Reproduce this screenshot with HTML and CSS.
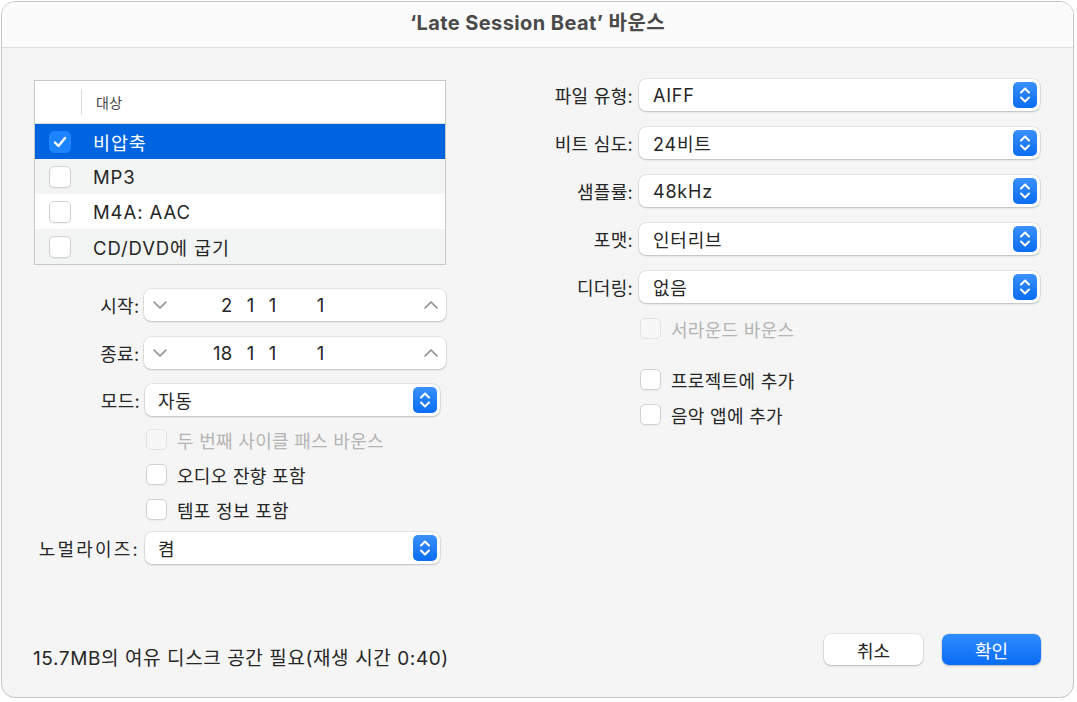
FILE: index.html
```html
<!DOCTYPE html>
<html lang="ko">
<head>
    <meta charset="UTF-8">
    <meta name="viewport" content="width=device-width, initial-scale=1.0">
    <title>바운스</title>
    <link rel="stylesheet" href="styles.css">
</head>
<body>
  <div class="window">
    <div class="titlebar">‘Late Session Beat’ 바운스</div>
    <div class="main">
      <div class="left">
        <div class="list">
          <div class="list-head"><span class="sep"></span>대상</div>
          <div class="list-row selected"><span class="cb checked"><svg width="14" height="12" viewBox="0 0 14 12"><path d="M2 6.5 L5.5 10 L12 2" fill="none" stroke="#fff" stroke-width="2.4" stroke-linecap="round" stroke-linejoin="round"/></svg></span>비압축</div>
          <div class="list-row grey"><span class="cb"></span>MP3</div>
          <div class="list-row"><span class="cb"></span>M4A: AAC</div>
          <div class="list-row grey"><span class="cb"></span>CD/DVD에 굽기</div>
        </div>

        <div class="field f-start">
          <label>시작:</label>
          <div class="stepper">
            <svg class="chev" width="16" height="10" viewBox="0 0 16 10"><path d="M2 2 L8 8 L14 2" fill="none" stroke="#8c8c8c" stroke-width="1.6" stroke-linecap="round" stroke-linejoin="round"/></svg>
            <div class="nums"><span class="n1">2</span><span class="n2">1</span><span class="n3">1</span><span class="n4">1</span></div>
            <svg class="chev" width="16" height="10" viewBox="0 0 16 10"><path d="M2 8 L8 2 L14 8" fill="none" stroke="#8c8c8c" stroke-width="1.6" stroke-linecap="round" stroke-linejoin="round"/></svg>
          </div>
        </div>
        <div class="field f-end">
          <label>종료:</label>
          <div class="stepper">
            <svg class="chev" width="16" height="10" viewBox="0 0 16 10"><path d="M2 2 L8 8 L14 2" fill="none" stroke="#8c8c8c" stroke-width="1.6" stroke-linecap="round" stroke-linejoin="round"/></svg>
            <div class="nums"><span class="n1">18</span><span class="n2">1</span><span class="n3">1</span><span class="n4">1</span></div>
            <svg class="chev" width="16" height="10" viewBox="0 0 16 10"><path d="M2 8 L8 2 L14 8" fill="none" stroke="#8c8c8c" stroke-width="1.6" stroke-linecap="round" stroke-linejoin="round"/></svg>
          </div>
        </div>
        <div class="field f-mode">
          <label>모드:</label>
          <div class="select short"><span>자동</span><span class="arrows"><svg width="24" height="26" viewBox="0 0 24 26"><path d="M8 10.5 L12 6.5 L16 10.5 M8 15.5 L12 19.5 L16 15.5" fill="none" stroke="#fff" stroke-width="2" stroke-linecap="round" stroke-linejoin="round"/></svg></span></div>
        </div>
        <div class="check left-check c-second disabled"><span class="cb"></span>두 번째 사이클 패스 바운스</div>
        <div class="check left-check c-gap"><span class="cb"></span>오디오 잔향 포함</div>
        <div class="check left-check c-gap"><span class="cb"></span>템포 정보 포함</div>
        <div class="field f-norm">
          <label class="wide">노멀라이즈:</label>
          <div class="select short"><span>켬</span><span class="arrows"><svg width="24" height="26" viewBox="0 0 24 26"><path d="M8 10.5 L12 6.5 L16 10.5 M8 15.5 L12 19.5 L16 15.5" fill="none" stroke="#fff" stroke-width="2" stroke-linecap="round" stroke-linejoin="round"/></svg></span></div>
        </div>
      </div>

      <div class="right">
        <div class="field r-field first">
          <label>파일 유형:</label>
          <div class="select"><span>AIFF</span><span class="arrows"><svg width="24" height="26" viewBox="0 0 24 26"><path d="M8 10.5 L12 6.5 L16 10.5 M8 15.5 L12 19.5 L16 15.5" fill="none" stroke="#fff" stroke-width="2" stroke-linecap="round" stroke-linejoin="round"/></svg></span></div>
        </div>
        <div class="field r-field">
          <label>비트 심도:</label>
          <div class="select"><span>24비트</span><span class="arrows"><svg width="24" height="26" viewBox="0 0 24 26"><path d="M8 10.5 L12 6.5 L16 10.5 M8 15.5 L12 19.5 L16 15.5" fill="none" stroke="#fff" stroke-width="2" stroke-linecap="round" stroke-linejoin="round"/></svg></span></div>
        </div>
        <div class="field r-field">
          <label>샘플률:</label>
          <div class="select"><span>48kHz</span><span class="arrows"><svg width="24" height="26" viewBox="0 0 24 26"><path d="M8 10.5 L12 6.5 L16 10.5 M8 15.5 L12 19.5 L16 15.5" fill="none" stroke="#fff" stroke-width="2" stroke-linecap="round" stroke-linejoin="round"/></svg></span></div>
        </div>
        <div class="field r-field">
          <label>포맷:</label>
          <div class="select"><span>인터리브</span><span class="arrows"><svg width="24" height="26" viewBox="0 0 24 26"><path d="M8 10.5 L12 6.5 L16 10.5 M8 15.5 L12 19.5 L16 15.5" fill="none" stroke="#fff" stroke-width="2" stroke-linecap="round" stroke-linejoin="round"/></svg></span></div>
        </div>
        <div class="field r-field">
          <label>디더링:</label>
          <div class="select"><span>없음</span><span class="arrows"><svg width="24" height="26" viewBox="0 0 24 26"><path d="M8 10.5 L12 6.5 L16 10.5 M8 15.5 L12 19.5 L16 15.5" fill="none" stroke="#fff" stroke-width="2" stroke-linecap="round" stroke-linejoin="round"/></svg></span></div>
        </div>
        <div class="check right-check r-surround disabled"><span class="cb"></span>서라운드 바운스</div>
        <div class="check right-check r-project"><span class="cb"></span>프로젝트에 추가</div>
        <div class="check right-check r-music"><span class="cb"></span>음악 앱에 추가</div>
      </div>
    </div>

    <div class="footer">
      <div class="note">15.7MB의 여유 디스크 공간 필요(재생 시간 0:40)</div>
      <div class="buttons">
        <button class="btn">취소</button>
        <button class="btn primary">확인</button>
      </div>
    </div>
  </div>
</body>
</html>
```

FILE: styles.css
```css
* {
  margin: 0;
  padding: 0;
  box-sizing: border-box;
}
body {
  background-color: #fff;
  font-family: Inter, "Noto Sans CJK KR", sans-serif;
  font-size: 18px;
  letter-spacing: 0.3px;
  color: #262626;
}
.window {
  margin: 1px 0 0 1px;
  width: 1073px;
  height: 697px;
  border: 1px solid #c4c4c4;
  border-radius: 14px;
  background-color: #f5f5f5;
  overflow: hidden;
  display: flex;
  flex-direction: column;
}
.titlebar {
  height: 46px;
  flex-shrink: 0;
  background-color: #fbfbfb;
  border-bottom: 1px solid #dedede;
  text-align: center;
  padding-top: 8px;
  line-height: 26px;
  font-weight: 700;
  font-size: 20px;
  letter-spacing: 0.4px;
  color: #4a4a4a;
}
.main {
  flex: 1;
  display: flex;
  padding: 32px 32px 0 32px;
}
.left {
  width: 412px;
  flex-shrink: 0;
}
.right {
  margin-left: 74px;
  flex: 1;
}

/* list of targets */
.list {
  border: 1px solid #c8c8c8;
  background-color: #fff;
}
.list-head {
  height: 43px;
  display: flex;
  align-items: center;
  font-size: 14px;
  color: #444;
  border-bottom: 1px solid #d8d8d8;
}
.sep {
  width: 1px;
  height: 26px;
  background-color: #dedede;
  margin: 0 14px 0 46px;
}
.list-row {
  height: 35px;
  display: flex;
  align-items: center;
  padding-left: 14px;
  font-size: 18.5px;
  letter-spacing: 0.9px;
  color: #262626;
  background-color: #fff;
}
.list-row.grey {
  background-color: #f3f4f4;
}
.list-row.selected {
  background-color: #0064e1;
  color: #fff;
}
.list-row .cb {
  width: 22px;
  height: 22px;
  margin-right: 22px;
}

/* checkbox */
.cb {
  width: 21px;
  height: 21px;
  border-radius: 5px;
  background-color: #fff;
  border: 1px solid #d2d2d2;
  box-shadow: 0 1px 1px rgba(0, 0, 0, 0.05);
  display: flex;
  align-items: center;
  justify-content: center;
  flex-shrink: 0;
}
.cb.checked {
  background-color: #1c84ff;
  border-color: #1c84ff;
}
.check {
  display: flex;
  align-items: center;
  height: 21px;
  color: #262626;
}
.check .cb {
  margin-right: 10px;
}
.check.disabled {
  color: #b4b4b4;
}
.check.disabled .cb {
  background-color: #f7f7f7;
  border-color: #e2e2e2;
  box-shadow: none;
}

/* form rows */
.field {
  display: flex;
  align-items: center;
}
.field label {
  width: 106px;
  margin-right: 5px;
  text-align: right;
  color: #262626;
  white-space: nowrap;
}
.field label.wide {
  letter-spacing: 2.2px;
}
.f-start { margin-top: 24px; }
.f-end { margin-top: 16px; }
.f-mode { margin-top: 15px; }
.c-second { margin-top: 13px; }
.c-gap { margin-top: 14px; }
.f-norm { margin-top: 12px; }
.left-check { padding-left: 112px; }

.stepper {
  width: 303px;
  height: 32px;
  background-color: #fff;
  border-radius: 7px;
  box-shadow: 0 0 0 0.5px rgba(0, 0, 0, 0.12), 0 1px 2px rgba(0, 0, 0, 0.18);
  display: flex;
  align-items: center;
  padding: 0 7px 0 8px;
  font-size: 18.5px;
}
.nums {
  flex: 1;
  display: flex;
}
.nums span {
  text-align: right;
}
.n1 { width: 64px; }
.n2 { width: 22px; }
.n3 { width: 22px; }
.n4 { width: 48px; }

.select {
  width: 401px;
  height: 32px;
  background-color: #fff;
  border-radius: 7px;
  box-shadow: 0 0 0 0.5px rgba(0, 0, 0, 0.12), 0 1px 2px rgba(0, 0, 0, 0.18);
  display: flex;
  align-items: center;
  justify-content: space-between;
  padding: 0 3px 0 14px;
  letter-spacing: 0.8px;
  color: #262626;
}
.select.short {
  width: 295px;
  padding-left: 13px;
}
.arrows {
  width: 24px;
  height: 26px;
  border-radius: 5px;
  background: linear-gradient(#3b91ff, #0a6cf2);
  display: flex;
}

.r-field label {
  width: 113px;
  margin-right: 6px;
}
.r-field { margin-top: 16px; }
.r-field.first { margin-top: -1px; }
.right-check { padding-left: 120px; }
.r-surround { margin-top: 15px; }
.r-project { margin-top: 30px; }
.r-music { margin-top: 14px; }

/* bottom bar */
.footer {
  flex-shrink: 0;
  height: 63px;
  display: flex;
  justify-content: space-between;
  padding: 0 32px 32px 31px;
}
.note {
  padding-top: 13px;
  line-height: 24px;
  font-size: 19px;
  letter-spacing: 0.6px;
  color: #262626;
}
.buttons {
  display: flex;
  gap: 19px;
}
.btn {
  width: 99px;
  height: 31px;
  border: none;
  border-radius: 7px;
  background-color: #fff;
  box-shadow: 0 0 0 0.5px rgba(0, 0, 0, 0.12), 0 1px 2px rgba(0, 0, 0, 0.2);
  font-family: Inter, "Noto Sans CJK KR", sans-serif;
  font-size: 18px;
  color: #262626;
}
.btn.primary {
  background: linear-gradient(#2f8cff, #0a6cf5);
  color: #fff;
}
```
